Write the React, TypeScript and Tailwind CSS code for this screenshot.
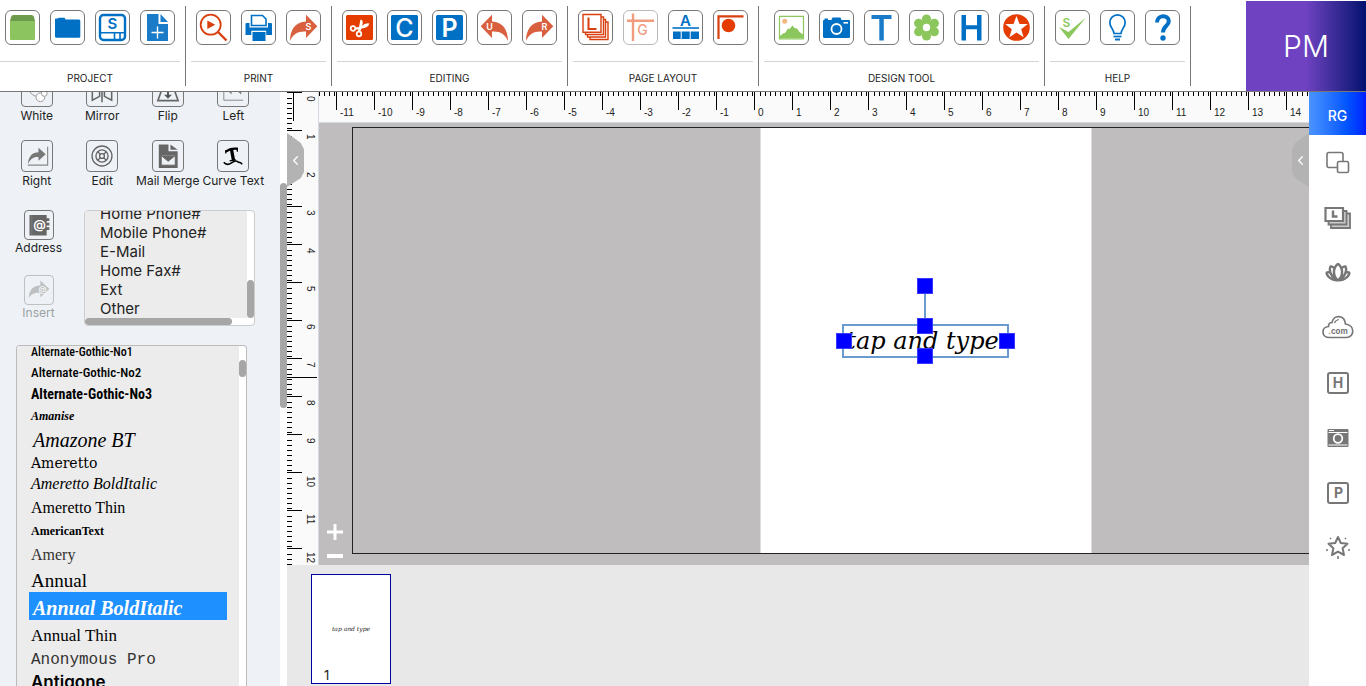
import type { ReactNode } from "react";
import { clsx } from "clsx";
import { ChevronLeft } from "lucide-react";
import { PiFlowerLotusBold } from "react-icons/pi";

const BLUE = "#0070c4";
const ORANGE = "#e53c00";
const CORAL = "#d9603f";
const GREEN = "#8bc75c";

type Tool = { name: string; icon: ReactNode; disabled?: boolean };

const glyph = (text: string, x: number, y: number, size: number, fill: string, weight = 600) => (
  <text x={x} y={y} fontSize={size} fontWeight={weight} fill={fill} textAnchor="middle">
    {text}
  </text>
);

const SWOOP = "M4 31C4 20 9 12 20 11.5V4.7L31.3 16.3L20 28V21.5C12 21 7 24 4 31Z";

const ribbon: { label: string; tools: Tool[] }[] = [
  {
    label: "PROJECT",
    tools: [
      {
        name: "New project",
        icon: (
          <>
            <path d="M5 11H30V29Q30 30 29 30H6Q5 30 5 29Z" fill="#8cc45f" />
            <path d="M8.5 5H26.5Q28.5 5 29 7L30 11H5L6 7Q6.5 5 8.5 5Z" fill="#6d9b4b" />
          </>
        ),
      },
      {
        name: "Open project",
        icon: (
          <path
            d="M5 9Q5 8.5 6 8.5H8L8.5 7.7H14.5L15.5 9.5H29Q30.3 9.5 30.3 11V26.5Q30.3 27.7 29 27.7H6.5Q5 27.7 5 26.5Z"
            fill={BLUE}
          />
        ),
      },
      {
        name: "Save",
        icon: (
          <>
            <rect x="5" y="5" width="25" height="25" rx="3.5" fill="none" stroke={BLUE} strokeWidth="2.4" />
            <path d="M5 22.7H30M19.5 22.7V30M25 22.7V30" fill="none" stroke={BLUE} strokeWidth="1.6" />
            {glyph("S", 17.5, 19, 15, BLUE)}
          </>
        ),
      },
      {
        name: "New page",
        icon: (
          <>
            <path d="M7 4H18.5V14H28V31H7Z" fill="#1a7bc9" />
            <path d="M20.5 4L28 12H20.5Z" fill="#1a7bc9" />
            <path d="M17.5 16.5V28.5M11.5 22.5H23.5" stroke="white" strokeWidth="1.4" />
          </>
        ),
      },
    ],
  },
  {
    label: "PRINT",
    tools: [
      {
        name: "Preview",
        icon: (
          <>
            <circle cx="14.7" cy="14.7" r="10" fill="none" stroke="#d9400f" strokeWidth="1.8" />
            <path d="M22 22L30.5 30.5" stroke="#d9400f" strokeWidth="2.4" />
            <path d="M11.3 10.5V19L19.3 14.7Z" fill="#d9400f" />
          </>
        ),
      },
      {
        name: "Print",
        icon: (
          <>
            <path d="M4.5 14Q4.5 13 5.5 13H8.5V17.5H27V13H30Q31 13 31 14V25H4.5Z" fill={BLUE} />
            <path d="M10.5 15.5V5.5H21.5L25 9V15.5Z" fill="white" stroke={BLUE} strokeWidth="1.6" />
            <path d="M10.3 20.7H25.2V25.5H10.3Z" fill="white" />
            <path d="M11.5 22H24.5V31H11.5Z" fill={BLUE} />
          </>
        ),
      },
      {
        name: "Send",
        icon: (
          <>
            <path d={SWOOP} fill={CORAL} />
            {glyph("S", 22.5, 20, 9, "white")}
          </>
        ),
      },
    ],
  },
  {
    label: "EDITING",
    tools: [
      {
        name: "Cut",
        icon: (
          <>
            <rect x="4" y="5" width="27" height="25" rx="1.5" fill={ORANGE} />
            <circle cx="11" cy="18.5" r="2.3" fill="none" stroke="white" strokeWidth="1.7" />
            <circle cx="17" cy="24" r="2.3" fill="none" stroke="white" strokeWidth="1.7" />
            <path
              d="M13 17.5L17 17L18.5 9.5Q21.5 10 20.5 14.5L20 16Q23 12.5 27.5 13.5Q26 18 19.5 18.5L18 22L15.5 21.5L16.5 19.5L13 19.5Z"
              fill="white"
            />
          </>
        ),
      },
      {
        name: "Copy",
        icon: (
          <>
            <rect x="4" y="5" width="27" height="25" rx="1.5" fill={BLUE} />
            {glyph("C", 17.5, 26.5, 25, "white", 500)}
          </>
        ),
      },
      {
        name: "Paste",
        icon: (
          <>
            <rect x="4" y="5" width="27" height="25" rx="1.5" fill={BLUE} />
            {glyph("P", 17.5, 26.5, 25, "white")}
          </>
        ),
      },
      {
        name: "Undo",
        icon: (
          <>
            <path d={SWOOP} fill={CORAL} transform="matrix(-1 0 0 1 35 0)" />
            {glyph("U", 12.5, 20, 9, "white")}
          </>
        ),
      },
      {
        name: "Redo",
        icon: (
          <>
            <path d={SWOOP} fill={CORAL} />
            {glyph("R", 22.5, 20, 9, "white")}
          </>
        ),
      },
    ],
  },
  {
    label: "PAGE LAYOUT",
    tools: [
      {
        name: "Layers",
        icon: (
          <>
            <g fill="white" stroke="#d9400f" strokeWidth="1.4">
              <path d="M12 12H30V29.5H12Z" />
              <path d="M9.5 9.5H27.5V27H9.5Z" />
              <path d="M7.5 7H25.5V24.5H7.5Z" />
              <path d="M5 4.5H23V22.3H5Z" />
            </g>
            <path d="M10.5 7.5V19H18.5" fill="none" stroke="#d9400f" strokeWidth="2" />
          </>
        ),
      },
      {
        name: "Guides",
        disabled: true,
        icon: (
          <>
            <path d="M10 3.5V31M4 10.7H31" stroke={ORANGE} strokeWidth="2.4" />
            {glyph("G", 19.5, 25, 14, ORANGE, 500)}
          </>
        ),
      },
      {
        name: "Table",
        icon: (
          <>
            {glyph("A", 17.5, 15.5, 15, BLUE)}
            <path d="M4.5 18H31" stroke={BLUE} strokeWidth="1.6" />
            <path d="M5 21.5H12.7V29H5ZM13.7 21.5H21.7V29H13.7ZM22.7 21.5H31V29H22.7Z" fill={BLUE} />
          </>
        ),
      },
      {
        name: "Ruler",
        icon: (
          <>
            <path d="M5.5 29V6.3H30.5" fill="none" stroke="#d9400f" strokeWidth="2.2" />
            <circle cx="15.5" cy="15.5" r="6.8" fill={ORANGE} />
          </>
        ),
      },
    ],
  },
  {
    label: "DESIGN TOOL",
    tools: [
      {
        name: "Picture",
        icon: (
          <>
            <path d="M5.5 6.3H29.5V29H5.5Z" fill="white" stroke={GREEN} strokeWidth="1.2" />
            <circle cx="10.7" cy="11.3" r="2.5" fill="#f2b880" />
            <path
              d="M6 28.5V26L9 23.5L11 23L14 18.5L15.5 19L18.5 15.5L21 18.5L22.5 18L25.5 22L29 24.5V28.5Z"
              fill={GREEN}
            />
          </>
        ),
      },
      {
        name: "Camera",
        icon: (
          <>
            <path
              d="M4 11Q4 10 5 10H5.5V8.5H9V10H12.5L13.5 7.5H21.5L22.5 10H30Q31 10 31 11V26.5Q31 28 30 28H5.5Q4 28 4 26.5Z"
              fill={BLUE}
            />
            <circle cx="17.5" cy="19" r="5" fill="none" stroke="white" strokeWidth="1.8" />
            <path d="M24.5 12.8H29" stroke="white" strokeWidth="1.6" />
          </>
        ),
      },
      { name: "Text", icon: <path d="M7.5 5H27.5V9H19.8V30.5H15.3V9H7.5Z" fill="#1a7bc9" /> },
      {
        name: "Clip art",
        icon: (
          <>
            <g fill={GREEN}>
              <circle cx="17.5" cy="9" r="4.6" />
              <circle cx="25.3" cy="13.3" r="4.6" />
              <circle cx="25.3" cy="21.7" r="4.6" />
              <circle cx="17.5" cy="26" r="4.6" />
              <circle cx="9.7" cy="21.7" r="4.6" />
              <circle cx="9.7" cy="13.3" r="4.6" />
              <circle cx="17.5" cy="17.5" r="7" />
            </g>
            <circle cx="17.5" cy="17.5" r="3.7" fill="white" />
          </>
        ),
      },
      { name: "Headline", icon: <path d="M7.5 5H12V15.3H23V5H27.5V30.5H23V19.3H12V30.5H7.5Z" fill={BLUE} /> },
      {
        name: "Shapes",
        icon: (
          <>
            <circle cx="17.5" cy="17.5" r="13.3" fill={ORANGE} />
            <path
              d="M17.5 6L20.5 14H28.8L22.2 19.2L24.6 27.3L17.5 22.6L10.4 27.3L12.8 19.2L6.2 14H14.5Z"
              fill="white"
            />
          </>
        ),
      },
    ],
  },
  {
    label: "HELP",
    tools: [
      {
        name: "Spell check",
        icon: (
          <>
            <path d="M4 17L13.5 22L31 7.5L13.5 29Z" fill={GREEN} />
            {glyph("S", 11.5, 17, 12, GREEN)}
          </>
        ),
      },
      {
        name: "Tips",
        icon: (
          <g fill="none" stroke={BLUE} strokeWidth="1.7">
            <path d="M14 23.5C14 19.5 9.8 17.5 9.8 12.5A7.7 7.7 0 0 1 25.2 12.5C25.2 17.5 21 19.5 21 23.5Z" />
            <path d="M13.5 26.5H21.5" />
            <path d="M15 29.5H20" strokeWidth="2" />
          </g>
        ),
      },
      {
        name: "Help",
        icon: (
          <>
            <path d="M12 12.5C12 4.5 23.8 4.5 23.8 11.2C23.8 16.3 18 16 18 22.5" fill="none" stroke={BLUE} strokeWidth="4" />
            <circle cx="18" cy="28" r="2.7" fill={BLUE} />
          </>
        ),
      },
    ],
  },
];

const panelTools: Tool[] = [
  {
    name: "White",
    icon: (
      <g fill="none" stroke="#999" strokeWidth="1">
        <circle cx="16" cy="12" r="9" />
        <circle cx="19" cy="22" r="4.5" fill="white" />
        <circle cx="23" cy="18" r="3" fill="white" />
      </g>
    ),
  },
  {
    name: "Mirror",
    icon: <path d="M5.5 8V25L13 21V11ZM25.5 8V25L18 21V11ZM15.5 5V27" fill="none" stroke="#666" strokeWidth="1.6" />,
  },
  {
    name: "Flip",
    icon: (
      <>
        <path d="M9.5 13H21.5L26 25.5H5Z" fill="none" stroke="#666" strokeWidth="1.7" />
        <path d="M15.5 23.5L11.5 19.5H14.5V9H16.5V19.5H19.5Z" fill="#555" />
      </>
    ),
  },
  {
    name: "Left",
    icon: (
      <>
        <path d="M6 5V25H26" fill="none" stroke="#888" strokeWidth="1" />
        <path d="M9 14L14 19V9ZM18 14L24 19V9Z" fill="#777" />
      </>
    ),
  },
  {
    name: "Right",
    icon: (
      <>
        <path d="M6 24C7 15 11 11.5 17 11.5V7L24.5 13.7L17 20.5V16.5C12 16 9 18 6 24Z" fill="#777" />
        <path d="M26.5 6V25H6" fill="none" stroke="#888" strokeWidth="1.2" />
      </>
    ),
  },
  {
    name: "Edit",
    icon: (
      <g fill="none" stroke="#666" strokeWidth="1.4">
        <circle cx="15.5" cy="15.5" r="10.3" />
        <circle cx="15.5" cy="15.5" r="6.3" />
        <circle cx="15.5" cy="15.5" r="2.5" />
        <path d="M11 11L14 14M20 11L17 14M11 20L14 17M20 20L17 17" />
      </g>
    ),
  },
  {
    name: "Mail Merge",
    icon: (
      <>
        <path d="M6 3.5H16V10.5H25.5V28H6Z" fill="#666" />
        <path d="M18 3.5L25.5 9H18Z" fill="#666" />
        <path d="M8.5 14.5H23V25H8.5ZM8.5 15L15.7 21L23 15" fill="#eef2f6" stroke="#666" strokeWidth="1" />
      </>
    ),
  },
  {
    name: "Curve Text",
    icon: (
      <g fill="none" stroke="black">
        <path d="M8 11Q13 7 20 8" strokeWidth="2.4" />
        <path d="M14 9L16 20" strokeWidth="3.4" />
        <path d="M12 20.5L18.5 19.5M8 9.5V13M20 7V11" strokeWidth="1.3" />
        <path d="M6 22Q9 26 14 22.5T21 22Q23 21.5 25 24" strokeWidth="1.6" />
      </g>
    ),
  },
];

const fields = ["Home Phone#", "Mobile Phone#", "E-Mail", "Home Fax#", "Ext", "Other"];

const fonts = [
  { name: "Alternate-Gothic-No1", style: "h-5 font-['Liberation_Sans_Narrow','Roboto_Condensed','Roboto'] text-[12px] font-medium" },
  { name: "Alternate-Gothic-No2", style: "h-5 font-['Liberation_Sans_Narrow','Roboto_Condensed','Roboto'] text-[13px] font-medium" },
  { name: "Alternate-Gothic-No3", style: "h-6 font-['Liberation_Sans_Narrow','Roboto_Condensed','Roboto'] text-[14px] font-bold" },
  { name: "Amanise", style: "h-5 font-['Liberation_Serif'] text-[12px] font-bold italic" },
  { name: "Amazone BT", style: "h-7 pl-1 font-['Liberation_Serif'] text-[20px] italic" },
  { name: "Ameretto", style: "h-[18px] font-['DejaVu_Serif'] text-[14px]" },
  { name: "Ameretto BoldItalic", style: "h-6 font-['Liberation_Serif'] text-[16px] italic" },
  { name: "Ameretto Thin", style: "h-6 font-['Liberation_Serif'] text-[16px]" },
  { name: "AmericanText", style: "h-[22px] font-['Liberation_Serif'] text-[12px] font-bold" },
  { name: "Amery", style: "h-[26px] font-['Liberation_Serif'] text-[16px] text-[#333]" },
  { name: "Annual", style: "h-6 font-['Liberation_Serif'] text-[19px]" },
  { name: "Annual BoldItalic", style: "h-7 pt-1 pl-1 font-['Liberation_Serif'] text-[20px] font-bold italic" },
  { name: "Annual Thin", style: "h-[30px] font-['Liberation_Serif'] text-[17px]" },
  { name: "Anonymous Pro", style: "h-5 font-['Liberation_Mono'] text-[16px] text-[#333]" },
  { name: "Antigone", style: "h-6 font-['Inter'] text-[17px] font-semibold" },
];

const sideTools: Tool[] = [
  {
    name: "Arrange",
    icon: (
      <g fill="white" stroke="#777" strokeWidth="1.6">
        <rect x="5" y="5.5" width="16" height="15" rx="2" />
        <rect x="15.5" y="14.5" width="11" height="11" rx="1.5" />
      </g>
    ),
  },
  {
    name: "Layouts",
    icon: (
      <>
        <g fill="#ccc" stroke="#777" strokeWidth="1.8">
          <path d="M9 11.5H28V26H9Z" />
          <path d="M6.5 9H24.5V22.5H6.5Z" />
          <path d="M3.5 6H21V19H3.5Z" fill="white" strokeWidth="2.2" />
        </g>
        <path d="M11 8.5V14.5H15.5" fill="none" stroke="#777" strokeWidth="2.4" />
      </>
    ),
  },
  { name: "Art", icon: <PiFlowerLotusBold x="3" y="3" size={26} color="#777" /> },
  {
    name: "Web",
    icon: (
      <>
        <path
          d="M7.5 25.5C-1 25.5-1 15 6.5 14.5C6.5 11.5 8.5 10.5 10 10.5C11.5 2.5 22.5 2.5 23.5 12C33.5 13 32.5 25.5 24.5 25.5Z"
          fill="none"
          stroke="#777"
          strokeWidth="1.7"
        />
        <path d="M12.5 11Q13.5 8 17 7.5" fill="none" stroke="#777" strokeWidth="1.2" />
        {glyph(".com", 16, 21.5, 8, "#777", 700)}
      </>
    ),
  },
  {
    name: "Headings",
    icon: (
      <>
        <rect x="6" y="6" width="20" height="20" rx="2" fill="none" stroke="#777" strokeWidth="2" />
        {glyph("H", 16, 21, 14, "#777", 700)}
      </>
    ),
  },
  {
    name: "Photos",
    icon: (
      <>
        <path d="M5.5 8Q5.5 7 6.5 7H25.5Q26.5 7 26.5 8V24Q26.5 25 25.5 25H6.5Q5.5 25 5.5 24Z" fill="#777" />
        <path d="M7 8.5H12M6.5 23H25.5M6.5 10.5H25.5" stroke="white" strokeWidth="1" />
        <circle cx="16" cy="16.5" r="4.3" fill="#777" stroke="white" strokeWidth="1.8" />
      </>
    ),
  },
  {
    name: "Patterns",
    icon: (
      <>
        <rect x="6" y="6" width="20" height="20" rx="2" fill="none" stroke="#777" strokeWidth="2" />
        {glyph("P", 16.5, 21, 14, "#777", 700)}
      </>
    ),
  },
  {
    name: "Effects",
    icon: (
      <g fill="none" stroke="#777" strokeWidth="2" strokeLinejoin="round">
        <path d="M16 5L18.8 11L25.5 11.8L20.6 16.3L22 23L16 19.7L10 23L11.4 16.3L6.5 11.8L13.2 11Z" />
        <path d="M8 6L9 7M24 6L23 7M4 18H6M26 18H28M16 24V27" strokeWidth="1.6" />
      </g>
    ),
  },
];

const range = (from: number, to: number) => Array.from({ length: to - from + 1 }, (_, i) => from + i);

const RibbonGroup = ({ label, tools }: { label: string; tools: Tool[] }) => (
  <section
    className={clsx(
      "flex shrink-0 flex-col border-r border-[#777] px-[5px] first:pl-0",
      label === "DESIGN TOOL" && "w-[286px]",
    )}
  >
    <div className="flex h-[57px] justify-end gap-[10px] border-b border-[#d4d4d4] px-[5px] pt-1">
      {tools.map((tool) => (
        <button
          key={tool.name}
          title={tool.name}
          aria-label={tool.name}
          disabled={tool.disabled}
          className={clsx("h-[35px] w-[35px] rounded-md border border-[#777] bg-white", tool.disabled && "opacity-50")}
        >
          <svg viewBox="1 1 33 33" className="block h-full w-full">
            {tool.icon}
          </svg>
        </button>
      ))}
    </div>
    <h2 className="pt-2 text-center text-[10px] leading-4 text-[#222]">{label}</h2>
  </section>
);

const PanelButton = ({ name, icon, disabled, compact }: Tool & { compact?: boolean }) => (
  <button disabled={disabled} className={clsx("flex flex-col items-center whitespace-nowrap", disabled && "opacity-40")}>
    <svg viewBox="0 0 31 31" className={clsx("rounded border border-[#777]", compact ? "h-[30px] w-[30px]" : "h-8 w-8")}>
      {icon}
    </svg>
    <span className={clsx("text-[12px]", compact ? "leading-4" : "leading-[18px]")}>{name}</span>
  </button>
);

const TopRuler = () => (
  <div className="h-[31px] shrink-0 overflow-hidden border-b border-[#d5d9e2] bg-[#fafafa]">
    <div className="-ml-[21px] flex">
      {range(-12, 14).map((n) => (
        <div key={n} className="w-[38px] shrink-0">
          <svg width="38" height="18" viewBox="0 0 38 18" className="block" shapeRendering="crispEdges">
            <path d="M.5 0V18M6.5 0V4M11.5 0V4M16.5 0V4M21.5 0V4M26.5 0V4M31.5 0V4M36.5 0V4" stroke="black" />
          </svg>
          {n > -12 && (
            <span className="-mt-1 block pl-1 font-['Liberation_Sans'] text-[10px] leading-[14px]">{n}</span>
          )}
        </div>
      ))}
    </div>
  </div>
);

const SideRuler = () => (
  <div className="w-8 shrink-0 overflow-hidden border-r border-[#d5d9e2] bg-[#fafafa]">
    {range(0, 12).map((n) => (
      <div key={n} className="flex h-[38px]">
        <svg width="18" height="38" viewBox="0 0 18 38" className="block shrink-0" shapeRendering="crispEdges">
          <path d="M0 .5H15M0 6.5H5M0 11.5H5M0 16.5H5M0 21.5H5M0 26.5H5M0 31.5H5M0 36.5H5" stroke="black" />
        </svg>
        <span className="pt-1 font-['Liberation_Sans'] text-[10px] leading-[10px] [writing-mode:vertical-rl]">{n}</span>
      </div>
    ))}
  </div>
);

const Handle = ({ className }: { className: string }) => (
  <span className={clsx("absolute h-4 w-4 border border-[#3a3aff] bg-[#0000ff]", className)} />
);

const App = () => (
  <div className="flex h-screen flex-col overflow-hidden bg-white font-['Inter',sans-serif] text-[#222]">
    <header className="flex h-[92px] shrink-0 border-b border-[#777]">
      <div className="flex min-w-0 flex-1 overflow-hidden pt-1.5 pb-[5px]">
        {ribbon.map((group) => (
          <RibbonGroup key={group.label} {...group} />
        ))}
      </div>
      <button className="mt-px w-[120px] shrink-0 bg-linear-to-r from-[#6f42c1] from-50% to-[#00106e] text-[30px] leading-none font-light text-white">
        PM
      </button>
    </header>

    <div className="flex min-h-0 flex-1">
      <aside className="flex w-[287px] shrink-0 overflow-hidden">
        <div className="flex min-w-0 flex-1 flex-col bg-[#eef2f6]">
          <div className="-mt-[17px] mr-[14px] ml-1 grid shrink-0 grid-cols-4 gap-y-[15px]">
            {panelTools.map((tool) => (
              <PanelButton key={tool.name} {...tool} />
            ))}
          </div>

          <div className="mt-5 flex shrink-0">
            <div className="flex w-[84px] flex-col gap-[19px] pr-[7px]">
              <PanelButton
                name="Address"
                compact
                icon={
                  <>
                    <path d="M5 4.5H24V27H5ZM24 8H27V11H24ZM24 13H27V16H24ZM24 18H27V21H24Z" fill="#666" />
                    <path d="M7.5 4.5V27" stroke="#999" strokeWidth=".5" />
                    {glyph("@", 16, 20, 14, "white")}
                  </>
                }
              />
              <PanelButton
                name="Insert"
                disabled
                compact
                icon={
                  <>
                    <path d="M4 24C5 14 10 10.5 17 10.5V5L27 14.5L17 23.5V18.5C11 18 7 19.5 4 24Z" fill="#777" />
                    {glyph("@", 19.5, 17.5, 9, "white")}
                  </>
                }
              />
            </div>
            <div className="flex h-[116px] w-[171px] flex-col overflow-hidden rounded border border-[#ccc] bg-white">
              <div className="flex min-h-0 flex-1 justify-between">
                <ul className="flex flex-1 flex-col justify-end bg-[#ececec] pl-[15px] text-[15px] leading-[19px]">
                  {fields.map((field) => (
                    <li key={field}>
                      <button className="block">{field}</button>
                    </li>
                  ))}
                </ul>
                <div className="flex w-[7px] flex-col justify-end">
                  <div className="h-[38px] rounded-full bg-[#a6a6a6]" />
                </div>
              </div>
              <div className="h-[7px] w-[147px] rounded-full bg-[#a6a6a6]" />
            </div>
          </div>

          <div className="mt-[19px] ml-4 flex min-h-0 w-[231px] flex-1 overflow-hidden rounded-t border border-b-0 border-[#bbb] bg-white">
            <ul className="-mt-1 flex-1 bg-[#ececec] pr-3 pl-3 text-black">
              {fonts.map((font) => (
                <li key={font.name}>
                  <button
                    className={clsx(
                      "flex w-full items-center px-0.5 leading-none whitespace-nowrap",
                      font.style,
                      font.name === "Annual BoldItalic" && "bg-[#1e90ff] text-white",
                    )}
                  >
                    {font.name}
                  </button>
                </li>
              ))}
            </ul>
            <div className="w-[7px] pt-[14px]">
              <div className="h-[17px] rounded-full bg-[#a6a6a6]" />
            </div>
          </div>
        </div>
        <div className="w-[7px] bg-white pt-[91px]">
          <div className="h-[225px] rounded-full bg-[#a6a6a6]" />
        </div>
      </aside>

      <main className="relative flex min-w-0 flex-1 flex-col">
        <div className="flex min-h-0 flex-1 bg-[#bfbdbe]">
          <SideRuler />
          <div className="flex min-w-0 flex-1 flex-col">
            <TopRuler />
            <div className="flex min-h-0 flex-1 pt-1 pb-[11px]">
              <div className="flex w-[33px] shrink-0 flex-col items-start justify-end pl-2">
                <button aria-label="Zoom in" className="py-2">
                  <svg width="16" height="16" viewBox="0 0 16 16">
                    <path d="M8 0V16M0 8H16" stroke="white" strokeWidth="3" />
                  </svg>
                </button>
                <button aria-label="Zoom out" className="-mb-1 pt-1.5">
                  <svg width="16" height="4" viewBox="0 0 16 4">
                    <path d="M0 2H16" stroke="white" strokeWidth="4" />
                  </svg>
                </button>
              </div>
              <div className="min-w-0 flex-1 overflow-hidden border border-r-0 border-[#222] pl-[407px]">
                <div className="relative h-full w-[332px] border-x border-[#ddd] bg-white">
                  {/* selected text object */}
                  <div className="absolute top-[196px] left-[81px] flex h-[34px] w-[167px] items-center justify-center border-2 border-[#6a9bd0] pr-1.5 font-['DejaVu_Serif'] text-[24px] whitespace-nowrap text-black italic">
                    tap and type
                    <span className="absolute -top-8 left-20 h-8 w-0.5 bg-[#6a9bd0]" />
                    <Handle className="-top-12 left-[73px]" />
                    <Handle className="-top-2 left-[73px]" />
                    <Handle className="top-[22px] left-[73px]" />
                    <Handle className="top-[7px] -left-2" />
                    <Handle className="top-[7px] -right-2" />
                  </div>
                </div>
              </div>
            </div>
          </div>
        </div>

        <div className="h-[121px] shrink-0 bg-[#e8e8e8] px-6 pt-[9px]">
          <button className="flex h-[110px] w-20 flex-col border border-[#0000a0] bg-white">
            <span className="flex w-full flex-1 items-end justify-center pb-[34px] font-['DejaVu_Serif'] text-[6px] text-[#222] italic">
              tap and type
            </span>
            <span className="w-full pl-3 text-left text-[13px] leading-4">1</span>
          </button>
        </div>

        {/* cursor position marks over the rulers */}
        <span className="absolute top-0 left-1.5 h-[29px] w-px bg-black" />
        <span className="absolute top-[285px] left-0 h-px w-[30px] bg-black" />

        <button
          aria-label="Collapse left panel"
          className="absolute top-[41px] left-0 flex h-[54px] w-[17px] items-center justify-center bg-[#b3b3b3] text-white [clip-path:polygon(0_0,80%_18%,100%_30%,100%_72%,80%_84%,0_100%)]"
        >
          <ChevronLeft size={15} className="shrink-0" />
        </button>
        <button
          aria-label="Collapse right panel"
          className="absolute top-[41px] right-0 flex h-[54px] w-[17px] items-center justify-center bg-[#b3b3b3] text-white [clip-path:polygon(100%_0,20%_18%,0_30%,0_72%,20%_84%,100%_100%)]"
        >
          <ChevronLeft size={15} className="shrink-0" />
        </button>
      </main>

      <nav className="flex w-[57px] shrink-0 flex-col items-center bg-white">
        <button className="h-[43px] w-full bg-linear-to-r from-[#4b93ff] to-[#0018ff] pt-1 text-[14px] font-medium text-white">
          RG
        </button>
        <div className="flex flex-col gap-[23px] pt-3">
          {sideTools.map((tool) => (
            <button key={tool.name} title={tool.name} aria-label={tool.name}>
              <svg viewBox="0 0 32 32" className="block h-8 w-8">
                {tool.icon}
              </svg>
            </button>
          ))}
        </div>
      </nav>
    </div>
  </div>
);

export default App;
